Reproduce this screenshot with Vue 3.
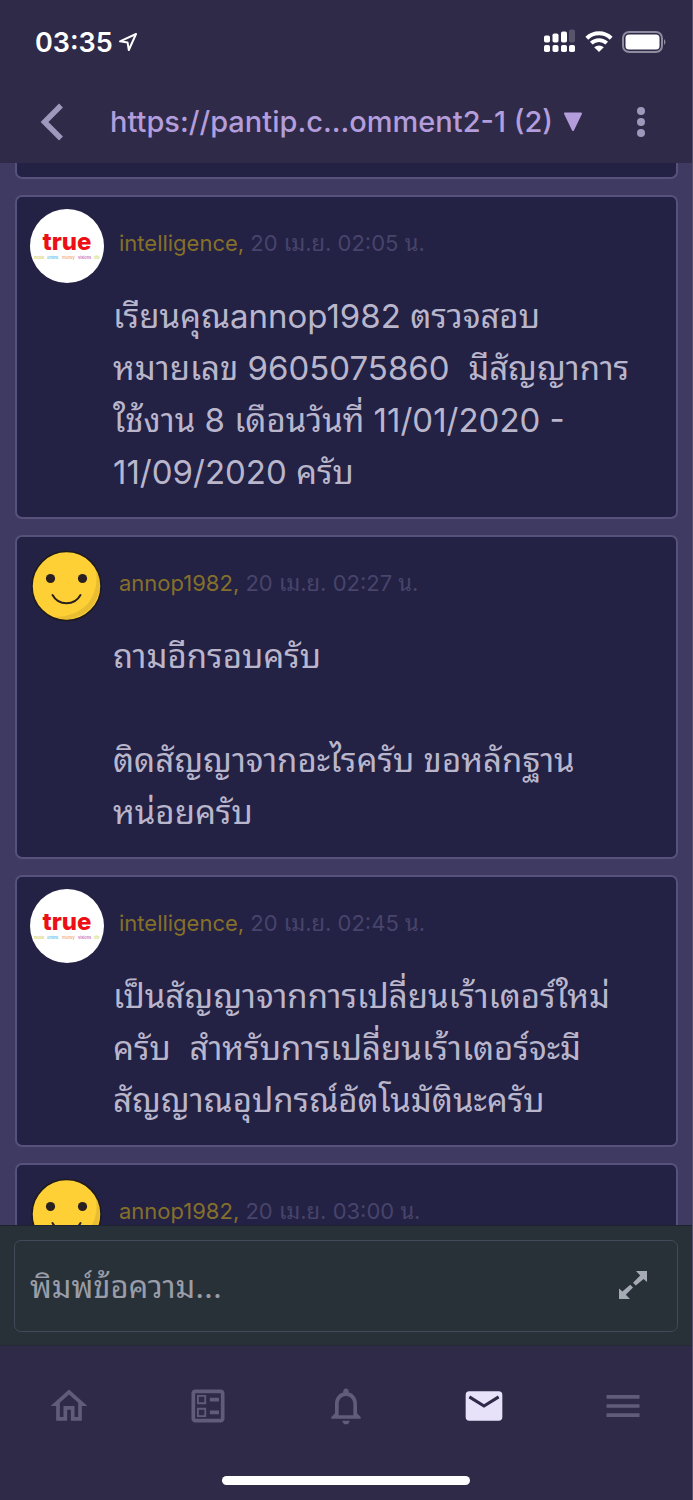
<script setup>
import { ref } from 'vue'

const draft = ref('')

const messages = [
  {
    id: 1,
    brand: true,
    author: 'intelligence,',
    time: '20 เม.ย. 02:05 น.',
    text: 'เรียนคุณannop1982 ตรวจสอบ\nหมายเลข 9605075860  มีสัญญาการ\nใช้งาน 8 เดือนวันที่ 11/01/2020 -\n11/09/2020 ครับ'
  },
  {
    id: 2,
    brand: false,
    author: 'annop1982,',
    time: '20 เม.ย. 02:27 น.',
    text: 'ถามอีกรอบครับ\n\nติดสัญญาจากอะไรครับ ขอหลักฐาน\nหน่อยครับ'
  },
  {
    id: 3,
    brand: true,
    author: 'intelligence,',
    time: '20 เม.ย. 02:45 น.',
    text: 'เป็นสัญญาจากการเปลี่ยนเร้าเตอร์ใหม่\nครับ  สำหรับการเปลี่ยนเร้าเตอร์จะมี\nสัญญาณอุปกรณ์อัตโนมัตินะครับ'
  },
  {
    id: 4,
    brand: false,
    author: 'annop1982,',
    time: '20 เม.ย. 03:00 น.',
    text: ''
  }
]
</script>

<template>
  <div class="app">
    <div class="status">
      <div class="clock">
        <span>03:35</span>
        <svg width="20" height="20" viewBox="0 0 20 20" aria-hidden="true">
          <path d="M18 2 L2 9.3 L9.6 10.6 L10.8 18 Z" fill="none" stroke="#fff" stroke-width="2" stroke-linejoin="round" />
        </svg>
      </div>
      <div class="indicators">
        <svg width="32" height="24" viewBox="0 0 32 24" aria-hidden="true">
          <g fill="#fff">
            <rect x="0" y="5.5" width="6" height="7" rx="1.8" />
            <rect x="8.5" y="3.5" width="6" height="9" rx="1.8" />
            <rect x="17" y="1.5" width="6" height="11" rx="1.8" />
            <rect x="25" y="-0.5" width="6" height="13" rx="1.8" opacity="0.2" />
            <rect x="0" y="15" width="6" height="7" rx="1.8" />
            <rect x="8.5" y="15" width="6" height="7" rx="1.8" />
            <rect x="17" y="15" width="6" height="7" rx="1.8" />
            <rect x="25" y="15" width="6" height="7" rx="1.8" />
          </g>
        </svg>
        <svg width="28" height="24" viewBox="0 0 28 24" aria-hidden="true">
          <path d="M1.8 8.2 A17.5 17.5 0 0 1 26.2 8.2" fill="none" stroke="#fff" stroke-width="4" />
          <path d="M6.3 13.2 A11 11 0 0 1 21.7 13.2" fill="none" stroke="#fff" stroke-width="3.8" />
          <path d="M14 22 L9.2 17.3 A7 7 0 0 1 18.8 17.3 Z" fill="#fff" />
        </svg>
        <svg width="45" height="24" viewBox="0 0 45 24" aria-hidden="true">
          <rect x="1" y="2" width="39" height="20" rx="6" fill="none" stroke="#8e8c9f" stroke-width="2" />
          <rect x="3.5" y="4.5" width="34" height="15" rx="3.5" fill="#fff" />
          <path d="M42 9 Q45 12 42 15 Z" fill="#8e8c9f" />
        </svg>
      </div>
    </div>

    <header class="topbar">
      <button class="icon-btn" type="button" aria-label="ย้อนกลับ">
        <svg width="24" height="38" viewBox="0 0 24 38">
          <path d="M21 2.5 L4.5 19 L21 35.5" fill="none" stroke="#9e99bc" stroke-width="5.5" />
        </svg>
      </button>
      <button class="title" type="button">
        <span>https://pantip.c...omment2-1 (2)</span>
        <svg width="20" height="20" viewBox="0 0 20 20" aria-hidden="true">
          <path d="M2 1.5 H18 L10 18 Z" fill="#b39ddb" stroke="#b39ddb" stroke-width="2" stroke-linejoin="round" />
        </svg>
      </button>
      <button class="icon-btn" type="button" aria-label="ตัวเลือก">
        <svg width="10" height="32" viewBox="0 0 10 32">
          <g fill="#9e99bc">
            <circle cx="5" cy="5" r="4" />
            <circle cx="5" cy="16" r="4" />
            <circle cx="5" cy="27" r="4" />
          </g>
        </svg>
      </button>
    </header>

    <main class="thread">
      <div class="card tail"></div>
      <article v-for="m in messages" :key="m.id" class="card">
        <div class="meta">
          <svg v-if="m.brand" class="avatar" viewBox="0 0 74 74" role="img" aria-label="true">
            <circle cx="37" cy="37" r="37" fill="#fff" />
            <text x="37" y="41" class="logo" text-anchor="middle">true</text>
            <g class="tags">
              <text x="4" y="50" fill="#c9c43a">move</text>
              <text x="17" y="50" fill="#29a9e0">online</text>
              <text x="32" y="50" fill="#f08a4b">money</text>
              <text x="48" y="50" fill="#b5359c">visions</text>
              <text x="64" y="50" fill="#b8d43a">life</text>
            </g>
          </svg>
          <svg v-else class="avatar" viewBox="0 0 74 74" aria-hidden="true">
            <circle cx="36.5" cy="37" r="34.5" fill="#ffd035" />
            <path d="M65.5 19 Q69.5 38 58.5 54 Q45.5 68 23.5 68 A34.5 34.5 0 0 0 65.5 19 Z" fill="#e8bd32" />
            <circle cx="36.5" cy="37" r="34.5" fill="none" stroke="#1f1a1c" stroke-width="1.5" />
            <circle cx="20.5" cy="29.5" r="4.6" fill="#2a2021" />
            <circle cx="52.5" cy="29.5" r="4.6" fill="#2a2021" />
            <path d="M22.5 46 A16 16 0 0 0 50.5 46" fill="none" stroke="#2a2021" stroke-width="2" stroke-linecap="round" />
          </svg>
          <p class="byline"><a href="#" class="author">{{ m.author }}</a> <time>{{ m.time }}</time></p>
        </div>
        <p class="body">{{ m.text }}</p>
      </article>
    </main>

    <form class="composer" @submit.prevent>
      <div class="field">
        <input v-model="draft" type="text" aria-label="พิมพ์ข้อความ" placeholder="พิมพ์ข้อความ..." />
        <button class="expand" type="button" aria-label="ขยาย">
          <svg width="30" height="30" viewBox="0 0 30 30">
            <g fill="#a5aab5">
              <path d="M18 0 H29 V11 L25.6 8 L17.8 14.6 L15 11.8 L22.2 4.6 Z" />
              <path d="M1 17.5 L4.4 20.4 L12.2 13.8 L15 16.6 L7.8 23.8 L12 28 H1 Z" />
            </g>
          </svg>
        </button>
      </div>
    </form>

    <nav class="tabs">
      <a href="#" aria-label="หน้าแรก">
        <svg width="44" height="44" viewBox="0 0 24 24">
          <path fill="#605c7a" d="M12 5.69l5 4.5V18h-2v-6H9v6H7v-7.81l5-4.5M12 3L2 12h3v8h6v-6h2v6h6v-8h3L12 3z" />
        </svg>
      </a>
      <a href="#" aria-label="รายการ">
        <svg width="44" height="44" viewBox="0 0 24 24">
          <path fill="#605c7a" fill-rule="evenodd" d="M13 7.5h5v2h-5zM13 14.5h5v2h-5zM19 3H5c-1.1 0-2 .9-2 2v14c0 1.1.9 2 2 2h14c1.1 0 2-.9 2-2V5c0-1.1-.9-2-2-2zm0 16H5V5h14v14zM11 6H6v5h5V6zm-1 4H7V7h3v3zM11 13H6v5h5v-5zm-1 4H7v-3h3v3z" />
        </svg>
      </a>
      <a href="#" aria-label="การแจ้งเตือน">
        <svg width="44" height="44" viewBox="0 0 24 24">
          <path fill="#605c7a" d="M12 22c1.1 0 2-.9 2-2h-4c0 1.1.9 2 2 2zm6-6v-5c0-3.07-1.63-5.64-4.5-6.32V4c0-.83-.67-1.5-1.5-1.5s-1.5.67-1.5 1.5v.68C7.64 5.36 6 7.92 6 11v5l-2 2v1h16v-1l-2-2zm-2 1H8v-6c0-2.48 1.51-4.5 4-4.5s4 2.02 4 4.5v6z" />
        </svg>
      </a>
      <a href="#" aria-label="ข้อความ" aria-current="page">
        <svg width="44" height="44" viewBox="0 0 24 24">
          <rect x="2" y="4" width="20" height="16" rx="2" fill="#e8e1fa" />
          <path d="M4 7 L12 12 L20 7" fill="none" stroke="#2e2a48" stroke-width="1.7" />
        </svg>
      </a>
      <a href="#" aria-label="เมนู">
        <svg width="44" height="44" viewBox="0 0 24 24">
          <path fill="#605c7a" d="M3 18h18v-2H3v2zm0-5h18v-2H3v2zm0-7v2h18V6H3z" />
        </svg>
      </a>
    </nav>
    <div class="home-row"><div class="home-bar"></div></div>
  </div>
</template>

<style>
body {
  background: #2e2a48;
}
</style>

<style scoped>
* {
  box-sizing: border-box;
}

.app {
  display: flex;
  flex-direction: column;
  height: 100vh;
  overflow: hidden;
  background: #2e2a48;
  border-right: 1px solid #57536f;
  font-family: Inter, "Noto Sans Thai Looped", Loma, Garuda, "Noto Sans", sans-serif;
  color: #b9b6cc;
}

button {
  padding: 0;
  border: 0;
  background: none;
  font: inherit;
  color: inherit;
}

svg {
  display: block;
  flex: none;
}

.status {
  display: flex;
  flex: none;
  align-items: center;
  justify-content: space-between;
  height: 84px;
  padding: 0 25px 0 35px;
  color: #fff;
}

.clock {
  display: flex;
  align-items: center;
  gap: 5px;
  font-size: 27px;
  font-weight: 600;
}

.indicators {
  display: flex;
  align-items: center;
  gap: 9px;
}

.indicators svg {
  overflow: visible;
}

.topbar {
  display: flex;
  flex: none;
  align-items: center;
  justify-content: space-between;
  height: 79px;
  padding: 0 31px 4px 32px;
}

.icon-btn {
  display: flex;
  align-items: center;
  justify-content: center;
  width: 40px;
  height: 48px;
}

.title {
  display: flex;
  align-items: center;
  gap: 10px;
  font-size: 29px;
  font-weight: 500;
  color: #b39ddb;
  white-space: nowrap;
}

.thread {
  display: flex;
  flex: 1;
  flex-direction: column;
  gap: 16px;
  min-height: 0;
  padding: 0 14px 0 15px;
  overflow: hidden;
  background: #3f3a61;
}

.card {
  flex: none;
  padding: 12px 12px 19px 13px;
  border: 2px solid #57527c;
  border-radius: 7px;
  background: #232144;
}

.tail {
  height: 16px;
  padding: 0;
  border-top: 0;
  border-radius: 0 0 7px 7px;
}

.meta {
  display: flex;
  gap: 15px;
  height: 74px;
}

.avatar {
  width: 74px;
  height: 74px;
}

.logo {
  font-size: 24px;
  font-weight: 800;
  fill: #ec1016;
}

.tags {
  font-size: 4px;
}

.byline {
  margin: 18px 0 0;
  font-size: 22px;
  line-height: 32px;
  color: #48446b;
}

.author {
  color: #85702a;
  text-decoration: none;
}

.body {
  min-height: 52px;
  margin: 7px 0 0 83px;
  font-size: 33px;
  line-height: 52px;
  white-space: pre-wrap;
}

.composer {
  flex: none;
  padding: 14px 14px 13px;
  border-top: 1px solid #1c2430;
  border-bottom: 1px solid #242a38;
  background: #283138;
}

.field {
  display: flex;
  align-items: center;
  height: 92px;
  padding: 0 29px 0 15px;
  border: 1px solid #44495a;
  border-radius: 7px;
}

.field input {
  flex: 1;
  min-width: 0;
  height: 64px;
  padding: 0;
  border: 0;
  outline: 0;
  background: none;
  font: inherit;
  font-size: 31px;
  color: #b9b6cc;
}

.field input::placeholder {
  color: #9a9da8;
  opacity: 1;
}

.tabs {
  display: grid;
  flex: none;
  grid-template-columns: repeat(5, 1fr);
  height: 120px;
}

.tabs a {
  display: flex;
  align-items: center;
  justify-content: center;
}

.home-row {
  display: flex;
  flex: none;
  justify-content: center;
  height: 34px;
  padding-top: 10px;
}

.home-bar {
  width: 248px;
  height: 9px;
  border-radius: 5px;
  background: #fff;
}
</style>
